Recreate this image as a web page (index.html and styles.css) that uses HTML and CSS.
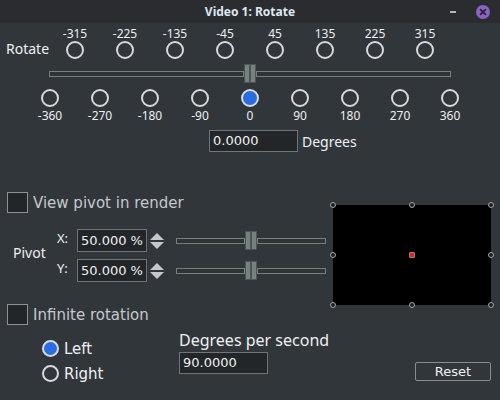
FILE: index.html
```html
<!DOCTYPE html>
<html>
<head>
  <meta charset="utf-8">
  <title>Video 1: Rotate</title>
  <link rel="stylesheet" href="styles.css">
</head>
<body>
<div class="window">
  <div class="titlebar">
    <span></span>
    <span class="title">Video 1: Rotate</span>
    <span class="win-buttons">
      <span class="minimize"></span>
      <span class="close">
        <svg width="14" height="14" viewBox="0 0 14 14"><circle cx="7" cy="7" r="7" fill="#8764c4"/><path d="M4.6 4.6 L9.4 9.4 M9.4 4.6 L4.6 9.4" stroke="#2b2530" stroke-width="1.8" stroke-linecap="round"/></svg>
      </span>
    </span>
  </div>

  <!-- rotation presets -->
  <div class="top-row">
    <span class="rot-label">Rotate</span>
    <div class="top-grid">
      <div class="cell"><span class="num">-315</span><span class="radio"></span></div>
      <div class="cell"><span class="num">-225</span><span class="radio"></span></div>
      <div class="cell"><span class="num">-135</span><span class="radio"></span></div>
      <div class="cell"><span class="num">-45</span><span class="radio"></span></div>
      <div class="cell"><span class="num">45</span><span class="radio"></span></div>
      <div class="cell"><span class="num">135</span><span class="radio"></span></div>
      <div class="cell"><span class="num">225</span><span class="radio"></span></div>
      <div class="cell"><span class="num">315</span><span class="radio"></span></div>
    </div>
  </div>
  <div class="slider big-slider"><span class="track"></span><span class="handle"><i></i><i></i></span><span class="track"></span></div>
  <div class="bottom-grid">
    <div class="cell"><span class="radio"></span><span class="num">-360</span></div>
    <div class="cell"><span class="radio"></span><span class="num">-270</span></div>
    <div class="cell"><span class="radio"></span><span class="num">-180</span></div>
    <div class="cell"><span class="radio"></span><span class="num">-90</span></div>
    <div class="cell"><span class="radio checked"></span><span class="num">0</span></div>
    <div class="cell"><span class="radio"></span><span class="num">90</span></div>
    <div class="cell"><span class="radio"></span><span class="num">180</span></div>
    <div class="cell"><span class="radio"></span><span class="num">270</span></div>
    <div class="cell"><span class="radio"></span><span class="num">360</span></div>
  </div>
  <div class="deg-row"><span class="field deg-field">0.0000</span><span class="deg-label">Degrees</span></div>

  <!-- pivot / infinite -->
  <div class="lower">
    <div class="left-col">
      <div class="check-row"><span class="checkbox"></span><span class="check-text">View pivot in render</span></div>
      <div class="pivot">
        <span class="pivot-label">Pivot</span>
        <div class="pivot-rows">
          <div class="pivot-row">
            <span class="axis">X:</span>
            <span class="field pct-field">50.000 %</span>
            <span class="spin"><b class="up"></b><b class="down"></b></span>
            <div class="slider small-slider"><span class="track"></span><span class="handle"><i></i><i></i></span><span class="track"></span></div>
          </div>
          <div class="pivot-row">
            <span class="axis">Y:</span>
            <span class="field pct-field">50.000 %</span>
            <span class="spin"><b class="up"></b><b class="down"></b></span>
            <div class="slider small-slider"><span class="track"></span><span class="handle"><i></i><i></i></span><span class="track"></span></div>
          </div>
        </div>
      </div>
      <div class="check-row infinite"><span class="checkbox"></span><span class="check-text">Infinite rotation</span></div>
      <div class="infinite-opts">
        <div class="direction">
          <div class="dir-row"><span class="radio small checked"></span><span>Left</span></div>
          <div class="dir-row"><span class="radio small"></span><span>Right</span></div>
        </div>
        <div class="dps">
          <span class="dps-label">Degrees per second</span>
          <span class="field dps-field">90.0000</span>
        </div>
      </div>
    </div>
    <div class="right-col">
      <div class="preview">
        <span class="knob k-tl"></span><span class="knob k-tc"></span><span class="knob k-tr"></span>
        <span class="knob k-ml"></span><span class="knob k-center"></span><span class="knob k-mr"></span>
        <span class="knob k-bl"></span><span class="knob k-bc"></span><span class="knob k-br"></span>
      </div>
      <button class="reset">Reset</button>
    </div>
  </div>
</div>
</body>
</html>
```

FILE: styles.css
```css
html, body {margin: 0; padding: 0;}
body {width: 500px; height: 400px; overflow: hidden; background: #31363b; color: #eff0f1; font-family: "Noto Sans", sans-serif;}
.window {width: 500px; height: 400px;}

.titlebar {height: 23px; background: #2a2c2f; display: grid; grid-template-columns: 1fr auto 1fr; align-items: center;}
.title {font-weight: bold; font-size: 12px; color: #dfe7f2;}
.win-buttons {display: flex; justify-content: flex-end; align-items: center; padding-right: 10px;}
.minimize {width: 6px; height: 2px; background: #b4b6b8; margin-right: 20px;}
.close {display: block; width: 14px; height: 14px;}
.close svg {display: block;}

.top-row {display: flex; padding-top: 4px;}
.rot-label {width: 50px; box-sizing: border-box; padding-left: 6px; font-size: 14px; line-height: 18px; align-self: flex-end; margin-bottom: 1px;}
.top-grid {display: grid; grid-template-columns: repeat(8, 50px);}
.bottom-grid {display: grid; grid-template-columns: repeat(9, 50px); margin: 6px 0 0 25px;}
.cell {display: flex; flex-direction: column; align-items: center;}
.num {font-size: 12px; line-height: 14px; color: #eceef0;}
.bottom-grid .num {margin-top: 2px;}

.radio {display: block; width: 18px; height: 18px; box-sizing: border-box; border: 2px solid #d6d8da; border-radius: 50%;}
.radio.checked {background: #2a6de3; border-color: #d8dadc;}
.radio.small {width: 17px; height: 17px;}

.slider {display: flex; align-items: center; height: 19px;}
.big-slider {margin: 5px 0 0 49px; width: 402px;}
.small-slider {width: 150px; margin-left: 13px;}
.track {flex: 1; height: 4px; border: 1px solid #76807e; background: #2e3433;}
.handle {display: flex; height: 19px; width: 12px;}
.handle i {flex: 1; box-sizing: border-box; border: 1px solid #4c5553; background: #76827f;}

.deg-row {display: flex; align-items: center; margin: 7px 0 0 209px;}
.field {display: block; box-sizing: border-box; background: #232629; border: 1px solid #6f767b; font-family: "DejaVu Sans", sans-serif; font-size: 13px; color: #eff0f1; padding-left: 3px;}
.deg-field {width: 89px; height: 22px; line-height: 20px;}
.deg-label {font-size: 14px; margin-left: 4px;}

.lower {display: flex; margin-top: 40px;}
.left-col {width: 333px;}
.right-col {width: 158px; display: flex; flex-direction: column;}

.check-row {display: flex; align-items: center; height: 21px; padding-left: 7px;}
.checkbox {width: 21px; height: 21px; box-sizing: border-box; border: 1px solid #8c9195; background: #232629;}
.check-text {font-family: "DejaVu Sans", sans-serif; font-size: 15px; color: #c5c9cd; margin-left: 5px;}
.infinite {margin-top: 22px;}

.pivot {display: flex; align-items: center; margin-top: 16px;}
.pivot-label {width: 44px; padding-left: 13px; font-size: 14px; margin-bottom: 6px;}
.pivot-rows {display: flex; flex-direction: column; gap: 7px;}
.pivot-row {display: flex; align-items: center; height: 23px;}
.axis {width: 20px; font-size: 13px; align-self: flex-start; line-height: 18px;}
.pct-field {width: 70px; height: 23px; line-height: 21px;}
.spin {display: flex; flex-direction: column; align-items: center; justify-content: center; width: 13px; margin-left: 3px; gap: 2px;}
.spin b {width: 0; height: 0; border-left: 7px solid transparent; border-right: 7px solid transparent;}
.spin .up {border-bottom: 7px solid #c6c9cc;}
.spin .down {border-top: 7px solid #c6c9cc;}

.infinite-opts {display: flex; align-items: flex-start;}
.direction {width: 179px; flex-shrink: 0; box-sizing: border-box; padding-left: 42px; margin-top: 11px;}
.dir-row {display: flex; align-items: center; height: 25px; font-family: "DejaVu Sans", sans-serif; font-size: 15px;}
.dir-row .radio {margin-right: 5px;}
.dps {display: flex; flex-direction: column; margin-top: 5px;}
.dps-label {font-size: 16px; line-height: 20px; white-space: nowrap;}
.dps-field {width: 89px; height: 22px; line-height: 20px; margin-top: 2px;}

.preview {position: relative; width: 158px; height: 100px; margin-top: 13px; background: #000;}
.knob {position: absolute; width: 6px; height: 6px; box-sizing: border-box; margin: -3px 0 0 -3px; border: 1px solid #a4a7aa; border-radius: 50%; background: #1c1e20;}
.k-tl {left: 0; top: 0;} .k-tc {left: 50%; top: 0;} .k-tr {left: 100%; top: 0;}
.k-ml {left: 0; top: 50%;} .k-mr {left: 100%; top: 50%;}
.k-bl {left: 0; top: 100%;} .k-bc {left: 50%; top: 100%;} .k-br {left: 100%; top: 100%;}
.k-center {left: 50%; top: 50%; background: #ee1c1c; border-radius: 1px; border-color: #8a8c8e;}

.reset {align-self: flex-end; margin-top: 57px; width: 76px; height: 19px; padding: 0; background: #31363b; border: 1px solid #868c91; border-radius: 2px; color: #eff0f1; font-family: "DejaVu Sans", sans-serif; font-size: 13px; line-height: 17px;}
```
